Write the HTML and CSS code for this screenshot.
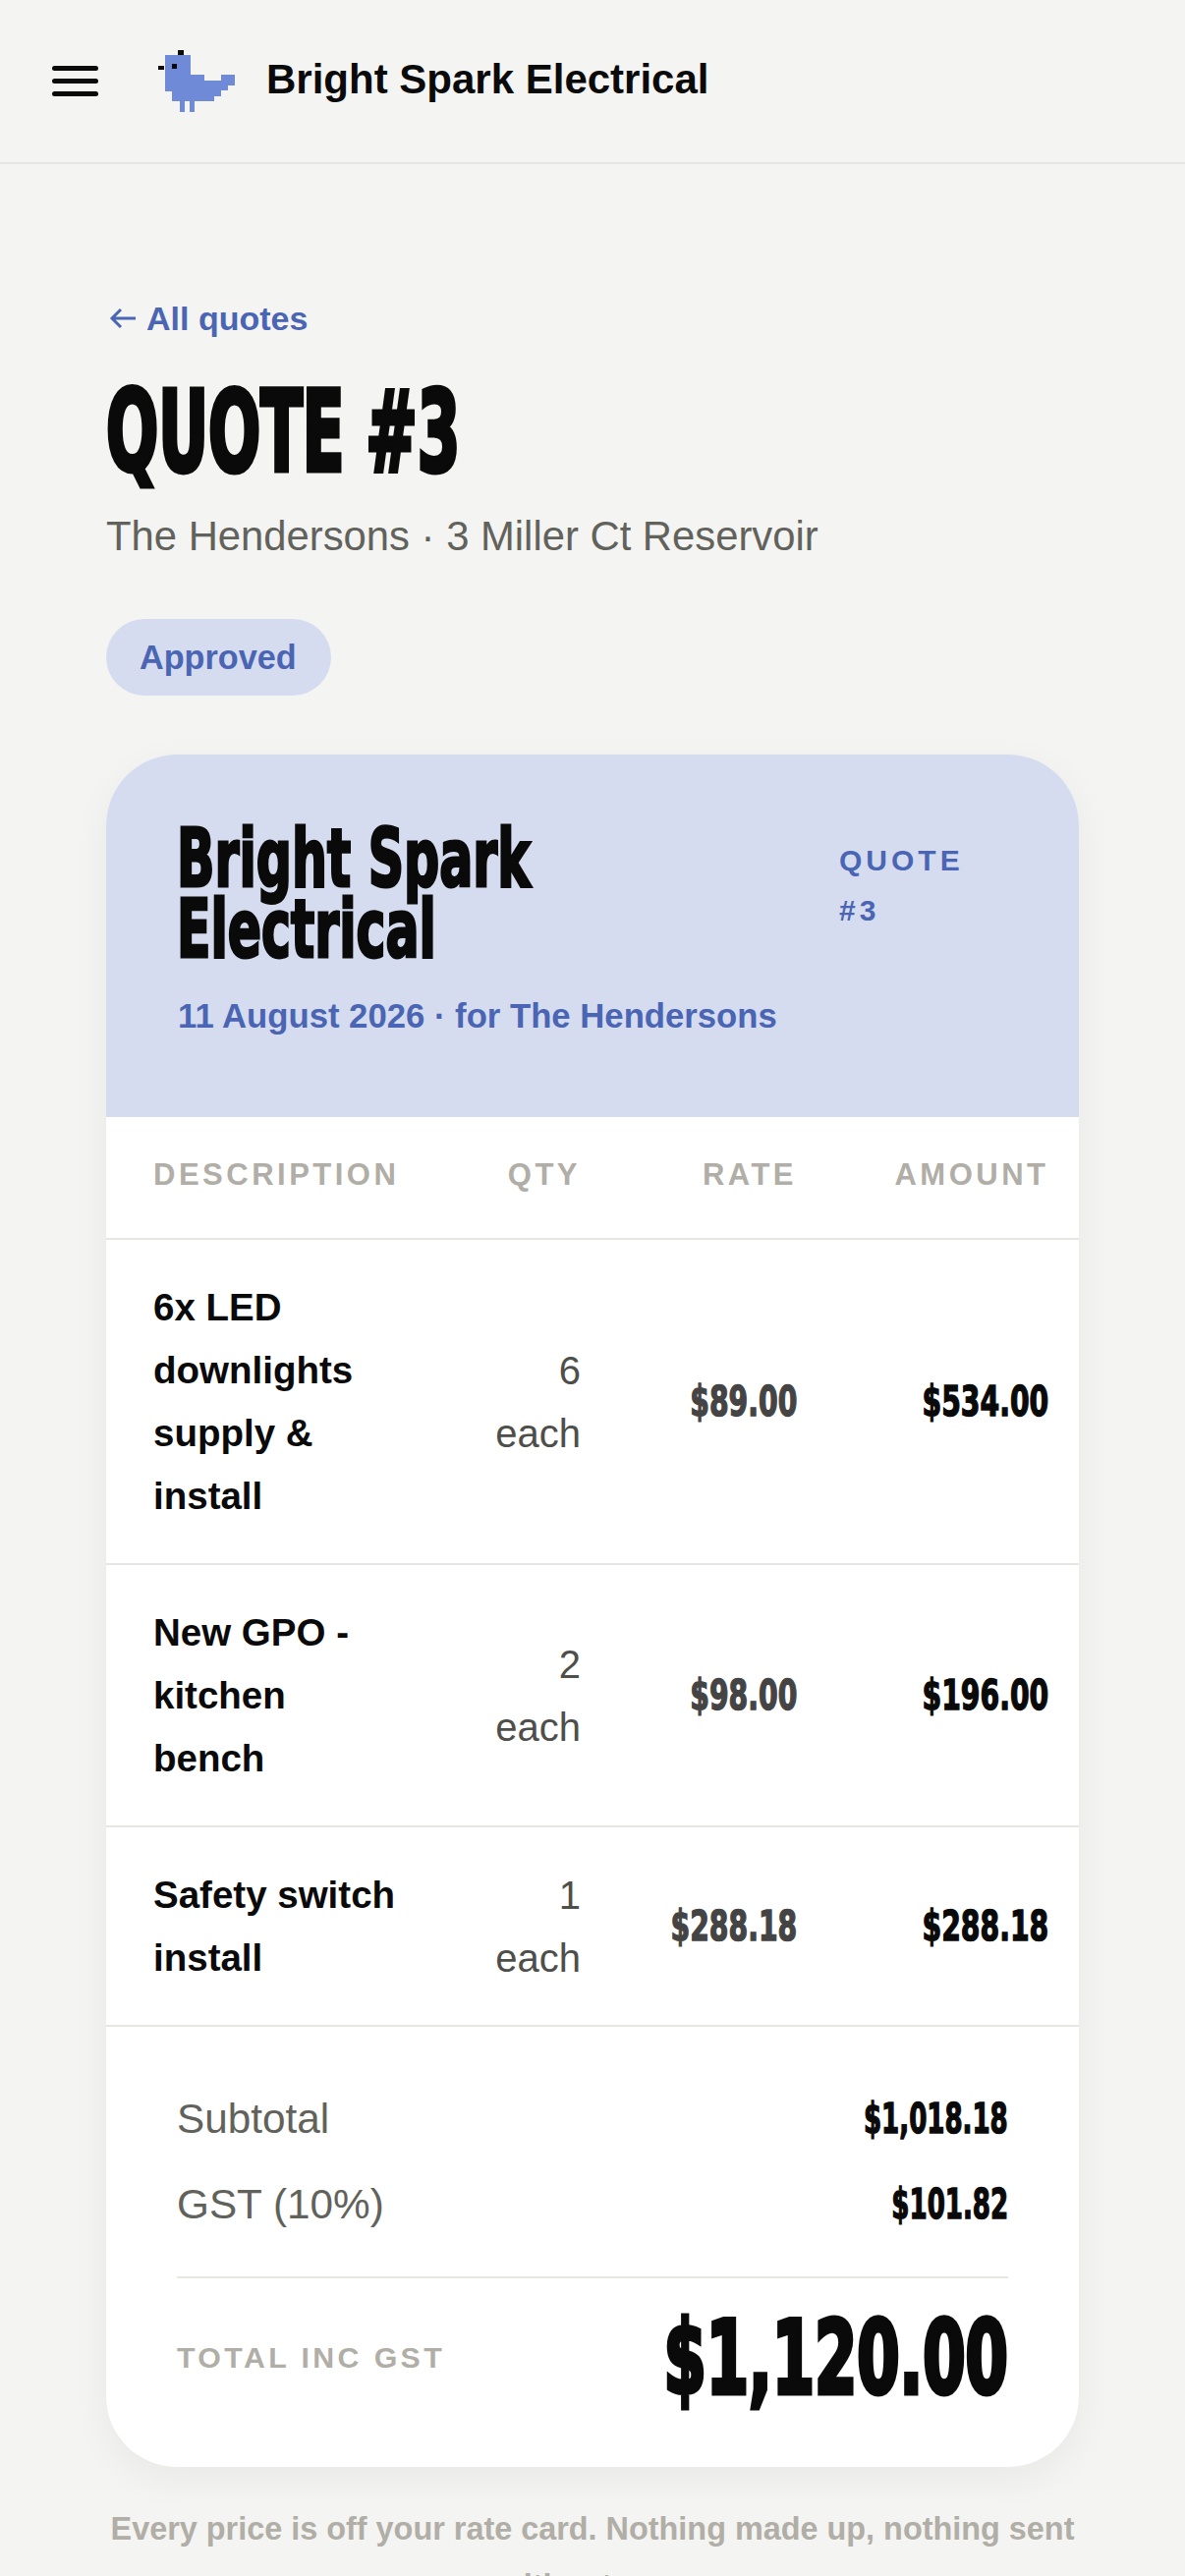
FILE: index.html
```html
<!DOCTYPE html>
<html lang="en">

<head>
  <meta charset="UTF-8" />
  <meta name="viewport" content="width=device-width, initial-scale=1.0" />
  <title>Quote #3</title>
  <link rel="stylesheet" href="styles.css">
</head>

<body>
  <header class="topbar">
    <button class="menu" aria-label="Menu">
      <span></span><span></span><span></span>
    </button>
    <svg class="logo" viewBox="160 50 82 66" width="82" height="66" shape-rendering="crispEdges">
      <path fill="#6f8bd8"
        d="M169 56h26v20h14v6h17v-6h14v11h-7v5h-7v6h-7v5h-43v-10h-7zM184 103h5v11h-5zM194 103h5v11h-5z" />
      <path fill="#0a0a0a" d="M176 65h5v5h-5zM162 67h6v4h-6zM182 51h6v5h-6z" />
    </svg>
    <span class="brand">Bright Spark Electrical</span>
  </header>

  <main class="page">
    <a class="back" href="#">
      <svg viewBox="0 0 28 24" width="28" height="24" fill="none" stroke="#4a65b3" stroke-width="3">
        <path d="M27 12H3M12 3l-9 9 9 9" />
      </svg>
      All quotes
    </a>
    <h1 class="title"><span class="squeeze">QUOTE #3</span></h1>
    <p class="sub">The Hendersons · 3 Miller Ct Reservoir</p>
    <span class="badge">Approved</span>

    <section class="card">
      <div class="card-head">
        <div class="card-from">
          <h2 class="card-name"><span class="squeeze">Bright Spark<br>Electrical</span></h2>
          <p class="card-date">11 August 2026 · for The Hendersons</p>
        </div>
        <div class="card-ref">QUOTE<br>#3</div>
      </div>

      <div class="row row-head">
        <div class="desc">DESCRIPTION</div>
        <div class="qty">QTY</div>
        <div class="rate">RATE</div>
        <div class="amount">AMOUNT</div>
      </div>
      <div class="row">
        <div class="desc">6x LED<br>downlights<br>supply &amp;<br>install</div>
        <div class="qty">6<br>each</div>
        <div class="rate"><span class="num">$89.00</span></div>
        <div class="amount"><span class="num">$534.00</span></div>
      </div>
      <div class="row">
        <div class="desc">New GPO -<br>kitchen<br>bench</div>
        <div class="qty">2<br>each</div>
        <div class="rate"><span class="num">$98.00</span></div>
        <div class="amount"><span class="num">$196.00</span></div>
      </div>
      <div class="row">
        <div class="desc">Safety switch<br>install</div>
        <div class="qty">1<br>each</div>
        <div class="rate"><span class="num">$288.18</span></div>
        <div class="amount"><span class="num">$288.18</span></div>
      </div>

      <div class="totals">
        <div class="line"><span>Subtotal</span><b class="num">$1,018.18</b></div>
        <div class="line"><span>GST (10%)</span><b class="num">$101.82</b></div>
        <div class="grand">
          <span>TOTAL INC GST</span>
          <b class="num">$1,120.00</b>
        </div>
      </div>
    </section>

    <p class="note">Every price is off your rate card. Nothing made up, nothing sent without you.</p>
  </main>
</body>

</html>
```

FILE: styles.css
```css
html,
body {
  height: 100%;
  overflow: hidden;
}

body {
  margin: 0;
  background: #f4f4f2;
  color: #0a0a0a;
  font-family: "Liberation Sans", Arial, sans-serif;
}

.topbar {
  display: flex;
  align-items: center;
  height: 165px;
  padding-left: 53px;
  border-bottom: 2px solid #e6e6e2;
}

.menu {
  display: flex;
  flex-direction: column;
  gap: 8px;
  width: 47px;
  padding: 0;
  border: 0;
  background: none;
}

.menu span {
  height: 5px;
  border-radius: 3px;
  background: #0a0a0a;
}

.logo {
  margin-left: 59px;
  margin-right: 30px;
}

.brand {
  margin-bottom: 3px;
  font-size: 42px;
  font-weight: 700;
}

.page {
  padding: 133px 108px 0;
}

.back {
  display: flex;
  align-items: center;
  gap: 10px;
  height: 48px;
  margin-left: 3px;
  color: #4a65b3;
  font-size: 34px;
  font-weight: 700;
  text-decoration: none;
}

/* no condensed display font here, so a heavy one gets squeezed */
.squeeze,
.num {
  display: inline-block;
  font-family: "DejaVu Sans Condensed", "DejaVu Sans", sans-serif;
  font-weight: 700;
  white-space: nowrap;
}

.squeeze {
  transform-origin: left center;
}

.num {
  transform-origin: right center;
}

.title {
  margin: 32px 0 0;
  font-size: 114px;
  font-weight: 700;
  line-height: 120px;
}

.title .squeeze {
  transform: scaleX(0.61);
  -webkit-text-stroke: 5px #0a0a0a;
}

.sub {
  margin: 18px 0 0;
  color: #62625c;
  font-size: 41.8px;
  line-height: 56px;
}

.badge {
  display: block;
  width: fit-content;
  margin-top: 56px;
  padding: 0 35px 0 34px;
  border-radius: 39px;
  background: #d6dcf0;
  color: #4a65b3;
  font-size: 34.2px;
  font-weight: 700;
  line-height: 78px;
}

.card {
  margin-top: 60px;
  border-radius: 72px;
  background: #fff;
  box-shadow: 0 12px 40px rgba(0, 0, 0, 0.05);
  overflow: hidden;
}

.card-head {
  display: grid;
  grid-template-columns: 673px 1fr;
  height: 369px;
  padding: 70px 0 0 72px;
  box-sizing: border-box;
  background: #d6dcf0;
}

.card-name {
  margin: 0;
  font-size: 82px;
  font-weight: 700;
  line-height: 72px;
}

.card-name .squeeze {
  transform: scaleX(0.685);
  -webkit-text-stroke: 3px #0a0a0a;
}

.card-date {
  margin: 28px 0 0 1px;
  color: #4a65b3;
  font-size: 34.7px;
  font-weight: 700;
  line-height: 48px;
}

.card-ref {
  margin-top: 12px;
  margin-left: 1px;
  color: #4a65b3;
  font-size: 30px;
  font-weight: 700;
  letter-spacing: 4px;
  line-height: 51px;
}

.row {
  display: grid;
  grid-template-columns: 268px 167px 220px 256.5px;
  align-items: center;
  padding: 36.5px 30.5px 36.5px 48px;
  border-bottom: 2px solid #e6e6e2;
  font-size: 40px;
  line-height: 64px;
}

.row-head {
  height: 125px;
  padding-top: 0;
  padding-bottom: 6px;
  box-sizing: border-box;
  color: #b0aea6;
  font-size: 31px;
  font-weight: 700;
  letter-spacing: 3.5px;
}

.row .desc {
  font-size: 38.5px;
  font-weight: 700;
}

.row-head .desc {
  font-size: 31px;
  white-space: nowrap;
}

.qty,
.rate,
.amount {
  text-align: right;
}

.qty {
  color: #4e4e4a;
}

.row-head .qty {
  color: #b0aea6;
}

.rate {
  color: #444;
}

.row-head .rate {
  color: #b0aea6;
}

.row .num {
  font-size: 43px;
  transform: scaleX(0.73);
  -webkit-text-stroke: 1.4px currentColor;
}

.totals {
  height: 448px;
  padding: 50px 72px 0;
  box-sizing: border-box;
}

.line {
  display: flex;
  justify-content: space-between;
  align-items: center;
  height: 87px;
  color: #62625c;
  font-size: 42.3px;
}

.line .num {
  color: #0a0a0a;
  font-size: 42px;
  transform: scaleX(0.69);
  -webkit-text-stroke: 1.4px #0a0a0a;
}

.grand {
  display: flex;
  justify-content: space-between;
  align-items: center;
  margin-top: 30px;
  padding-top: 24px;
  border-top: 2px solid #e6e6e2;
}

.grand span {
  color: #b0aea6;
  font-size: 30.3px;
  font-weight: 700;
  letter-spacing: 3.4px;
}

.grand .num {
  font-size: 104px;
  line-height: 114px;
  transform: scaleX(0.665);
  -webkit-text-stroke: 5px #0a0a0a;
}

.note {
  margin: 34px 0 0;
  color: #b0aea6;
  font-size: 32.4px;
  font-weight: 700;
  line-height: 58px;
  text-align: center;
}
```
